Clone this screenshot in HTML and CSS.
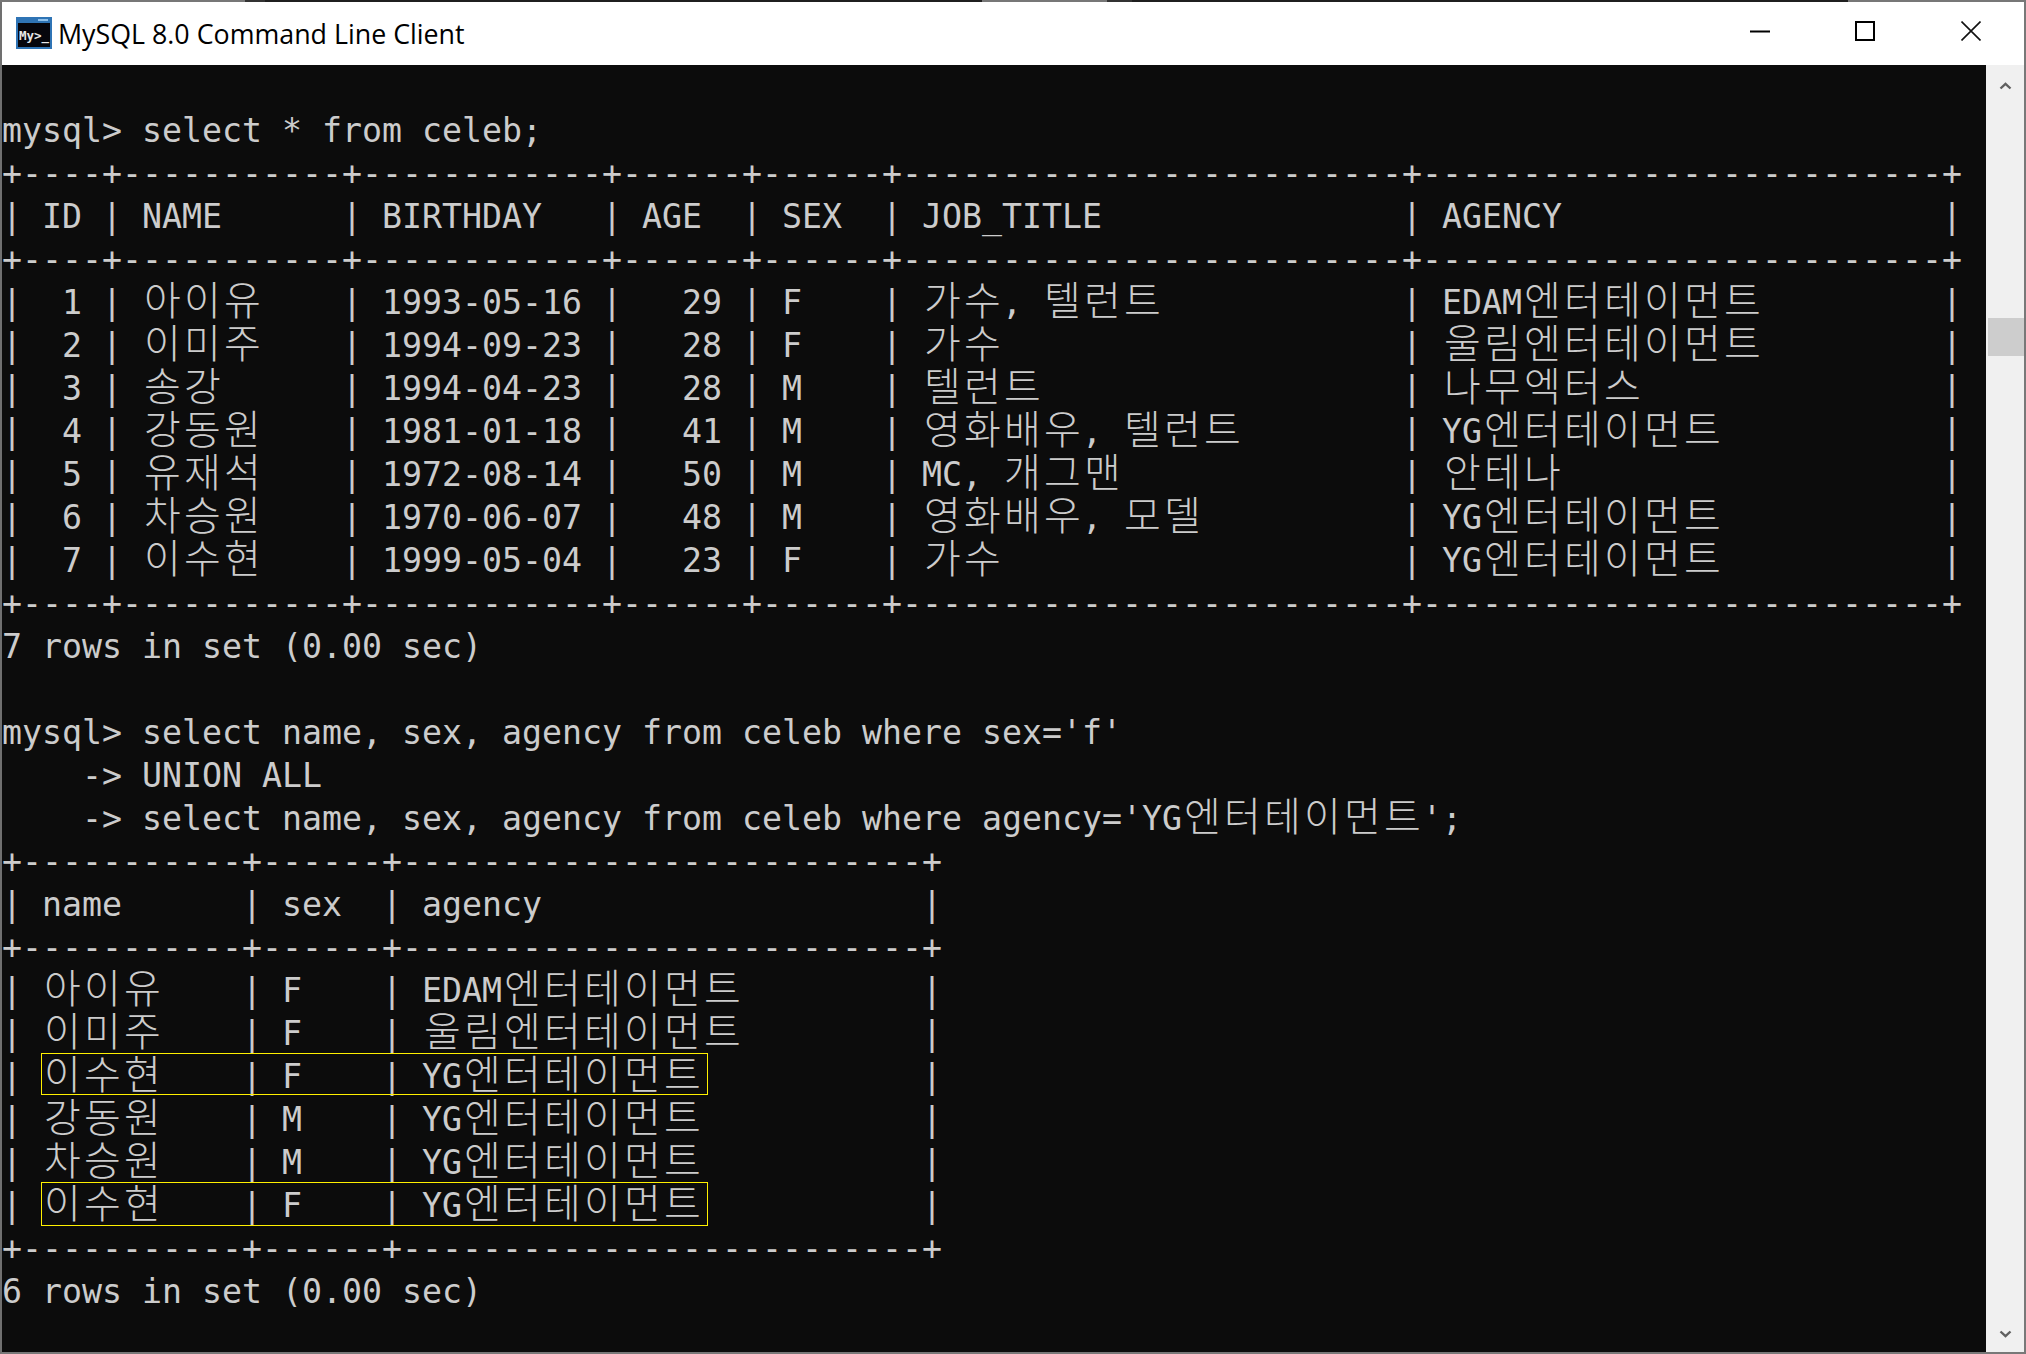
FILE: index.html
```html
<!DOCTYPE html>
<html lang="ko">
<head>
<meta charset="utf-8">
<title>MySQL 8.0 Command Line Client</title>
<link rel="stylesheet" href="styles.css">
</head>
<body>
<div class="window">
  <div class="strip"><i class="s1"></i><i class="s2"></i><i class="s3"></i><i class="s1 s4"></i><i class="s2 s5"></i><i class="s3 s6"></i><i class="s1"></i></div>
  <header class="titlebar">
    <svg class="appicon" viewBox="0 0 36 32" aria-hidden="true">
      <rect x="0" y="0" width="36" height="32" fill="#2f74b5"/>
      <rect x="2" y="6" width="32" height="24" fill="#06060c"/>
      <rect x="22" y="2" width="10" height="2" fill="#8fc0ea"/>
      <text x="3" y="23" class="icontext">My&gt;_</text>
    </svg>
    <span class="title">MySQL 8.0 Command Line Client</span>
    <div class="controls">
      <svg class="ctl ctl-min" viewBox="0 0 20 20" aria-hidden="true"><path d="M0 10.5H20" /></svg>
      <svg class="ctl ctl-max" viewBox="0 0 20 20" aria-hidden="true"><rect x="1" y="1" width="18" height="18"/></svg>
      <svg class="ctl ctl-close" viewBox="0 0 20 20" aria-hidden="true"><path d="M0.5 0.5L19.5 19.5M19.5 0.5L0.5 19.5"/></svg>
    </div>
  </header>
  <main class="body">
    <div class="terminal">
<div class="line"> </div>
<div class="line">mysql&gt; select * from celeb;</div>
<div class="line">+----+-----------+------------+------+------+-------------------------+--------------------------+</div>
<div class="line">| ID | NAME      | BIRTHDAY   | AGE  | SEX  | JOB_TITLE               | AGENCY                   |</div>
<div class="line">+----+-----------+------------+------+------+-------------------------+--------------------------+</div>
<div class="line">|  1 | <span class="ko">아이유</span>    | 1993-05-16 |   29 | F    | <span class="ko">가수</span>, <span class="ko">텔런트</span>            | EDAM<span class="ko">엔터테이먼트</span>         |</div>
<div class="line">|  2 | <span class="ko">이미주</span>    | 1994-09-23 |   28 | F    | <span class="ko">가수</span>                    | <span class="ko">울림엔터테이먼트</span>         |</div>
<div class="line">|  3 | <span class="ko">송강</span>      | 1994-04-23 |   28 | M    | <span class="ko">텔런트</span>                  | <span class="ko">나무엑터스</span>               |</div>
<div class="line">|  4 | <span class="ko">강동원</span>    | 1981-01-18 |   41 | M    | <span class="ko">영화배우</span>, <span class="ko">텔런트</span>        | YG<span class="ko">엔터테이먼트</span>           |</div>
<div class="line">|  5 | <span class="ko">유재석</span>    | 1972-08-14 |   50 | M    | MC, <span class="ko">개그맨</span>              | <span class="ko">안테나</span>                   |</div>
<div class="line">|  6 | <span class="ko">차승원</span>    | 1970-06-07 |   48 | M    | <span class="ko">영화배우</span>, <span class="ko">모델</span>          | YG<span class="ko">엔터테이먼트</span>           |</div>
<div class="line">|  7 | <span class="ko">이수현</span>    | 1999-05-04 |   23 | F    | <span class="ko">가수</span>                    | YG<span class="ko">엔터테이먼트</span>           |</div>
<div class="line">+----+-----------+------------+------+------+-------------------------+--------------------------+</div>
<div class="line">7 rows in set (0.00 sec)</div>
<div class="line"> </div>
<div class="line">mysql&gt; select name, sex, agency from celeb where sex='f'</div>
<div class="line">    -&gt; UNION ALL</div>
<div class="line">    -&gt; select name, sex, agency from celeb where agency='YG<span class="ko">엔터테이먼트</span>';</div>
<div class="line">+-----------+------+--------------------------+</div>
<div class="line">| name      | sex  | agency                   |</div>
<div class="line">+-----------+------+--------------------------+</div>
<div class="line">| <span class="ko">아이유</span>    | F    | EDAM<span class="ko">엔터테이먼트</span>         |</div>
<div class="line">| <span class="ko">이미주</span>    | F    | <span class="ko">울림엔터테이먼트</span>         |</div>
<div class="line">| <span class="ko">이수현</span>    | F    | YG<span class="ko">엔터테이먼트</span>           |</div>
<div class="line">| <span class="ko">강동원</span>    | M    | YG<span class="ko">엔터테이먼트</span>           |</div>
<div class="line">| <span class="ko">차승원</span>    | M    | YG<span class="ko">엔터테이먼트</span>           |</div>
<div class="line">| <span class="ko">이수현</span>    | F    | YG<span class="ko">엔터테이먼트</span>           |</div>
<div class="line">+-----------+------+--------------------------+</div>
<div class="line">6 rows in set (0.00 sec)</div>
<div class="mark mark-a"></div>
<div class="mark mark-b"></div>
    </div>
    <aside class="scrollbar">
      <svg class="arrow arrow-up" viewBox="0 0 12 8" aria-hidden="true"><path d="M1 6.5L6 1.8L11 6.5"/></svg>
      <div class="thumb"></div>
      <svg class="arrow arrow-down" viewBox="0 0 12 8" aria-hidden="true"><path d="M1 1.5L6 6.2L11 1.5"/></svg>
    </aside>
  </main>
</div>
</body>
</html>
```
FILE: styles.css
```css
* { box-sizing: border-box; }
html, body { margin: 0; height: 100%; overflow: hidden; }
body { background: #747474; }

.window {
  display: flex;
  flex-direction: column;
  height: 100vh;
  background: #ffffff;
  border-left: 2px solid #707070;
  border-right: 2px solid #787878;
  border-bottom: 2px solid #787878;
}

.strip { display: flex; height: 2px; flex: none; margin-left: -2px; margin-right: -2px; }
.strip i { display: block; height: 2px; }
.s1 { width: 245px; background: #777777; }
.s2 { width: 20px; background: #333333; flex: none; }
.s3 { flex: 1; background: #1f1f1f; }
.s4 { width: 125px; }
.s5 { width: 25px; }
.s1:last-child { width: 178px; }

.titlebar {
  display: flex;
  align-items: center;
  height: 63px;
  flex: none;
  background: #ffffff;
  padding-left: 14px;
}
.appicon { width: 36px; height: 32px; flex: none; margin-bottom: 2px; }
.icontext { font-family: "DejaVu Sans Mono", monospace; font-weight: 700; font-size: 12.5px; fill: #e8e8e8; }
.title {
  margin-left: 6px;
  font-family: "Open Sans", "Noto Sans", sans-serif;
  font-size: 26.8px;
  color: #000000;
  white-space: nowrap;
}
.controls { margin-left: auto; display: flex; align-items: center; margin-bottom: 6px; padding-right: 43px; }
.ctl { width: 20px; height: 20px; fill: none; stroke: #000000; }
.ctl-min { stroke-width: 2; }
.ctl-max { margin-left: 85px; stroke-width: 2; }
.ctl-close { margin-left: 86px; stroke-width: 1.6; stroke: #111111; }

.body { display: flex; flex: 1; min-height: 0; }

.terminal {
  position: relative;
  flex: 1;
  min-width: 0;
  overflow: hidden;
  background: #0c0c0c;
  color: #cccccc;
  padding-top: 1px;
  font-family: "DejaVu Sans Mono", "Liberation Mono", monospace;
  font-size: 33.22px;
}
.line { height: 43px; line-height: 43px; white-space: pre; }
.ko {
  font-family: "Noto Sans CJK KR", "Noto Sans", sans-serif;
  font-weight: 300;
  font-size: 40px;
  letter-spacing: 3.2px;
  line-height: 0;
  vertical-align: -1px;
  margin-left: 2px;
  margin-right: -2px;
  color: #cccccc;
}
.mark { position: absolute; border: 1.5px solid #fff000; left: 39px; width: 667px; }
.mark-a { top: 988px; height: 42px; }
.mark-b { top: 1117px; height: 44px; }

.scrollbar {
  display: flex;
  flex-direction: column;
  align-items: center;
  flex: none;
  width: 38px;
  background: #f0f0f0;
  padding: 17px 0 14px 1px;
}
.arrow { width: 13px; height: 8px; flex: none; fill: none; stroke: #606060; stroke-width: 2.4; }
.thumb { width: 36px; height: 38px; margin-top: 228px; background: #cdcdcd; flex: none; }
.arrow-down { margin-top: auto; }
```
